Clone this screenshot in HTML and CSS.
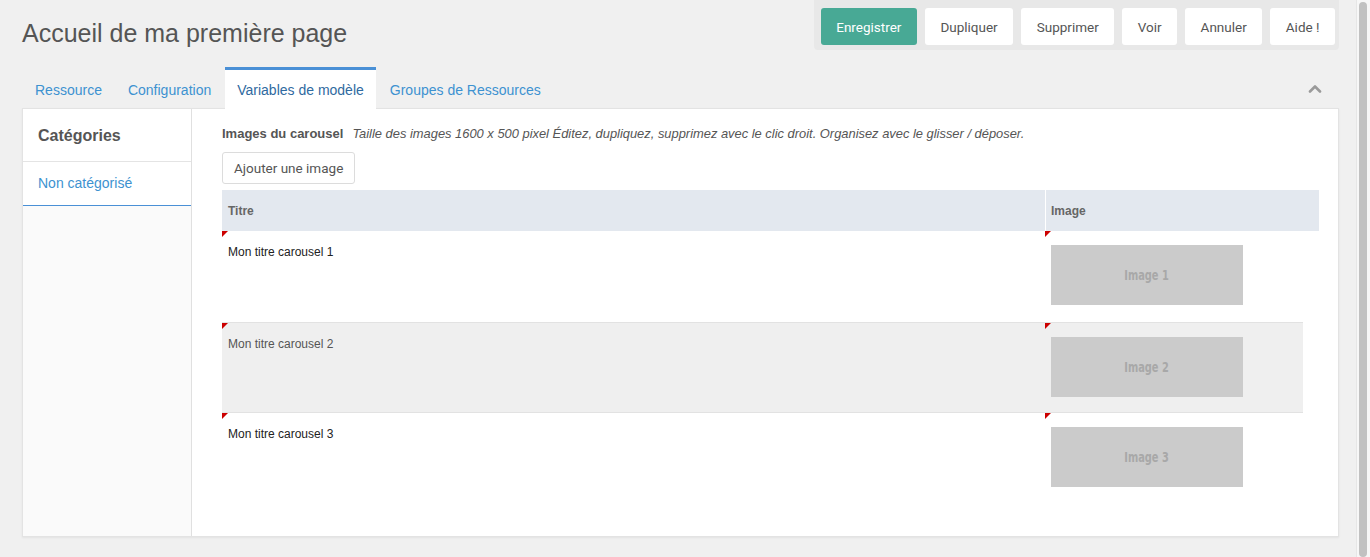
FILE: index.html
```html
<!DOCTYPE html>
<html lang="fr">
<head>
  <meta charset="UTF-8" />
  <title>Accueil de ma première page</title>
  <link rel="stylesheet" href="styles.css">
</head>
<body>

  <div class="page">
    <!-- en-tête : titre + barre d'actions -->
    <div class="top">
      <h1 class="title">Accueil de ma première page</h1>
      <div class="actions">
        <button class="btn btn-primary">Enregistrer</button>
        <button class="btn">Dupliquer</button>
        <button class="btn">Supprimer</button>
        <button class="btn">Voir</button>
        <button class="btn">Annuler</button>
        <button class="btn">Aide !</button>
      </div>
    </div>

    <!-- onglets -->
    <div class="tabs">
      <a class="tab">Ressource</a>
      <a class="tab">Configuration</a>
      <a class="tab active">Variables de modèle</a>
      <a class="tab">Groupes de Ressources</a>
      <span class="collapse">
        <svg width="14" height="9" viewBox="0 0 14 9"><path d="M2 7.5 L7 2.5 L12 7.5" fill="none" stroke="#9a9a9a" stroke-width="2.6" stroke-linecap="round" stroke-linejoin="round"/></svg>
      </span>
    </div>

    <div class="panel">
      <div class="sidebar">
        <div class="side-head">Catégories</div>
        <a class="side-item">Non catégorisé</a>
      </div>

      <div class="main">
        <div class="field-label">
          <strong>Images du carousel</strong><em>Taille des images 1600 x 500 pixel Éditez, dupliquez, supprimez avec le clic droit. Organisez avec le glisser / déposer.</em>
        </div>
        <button class="btn btn-small">Ajouter une image</button>

        <div class="grid">
          <div class="grid-head">
            <div class="hcell">Titre</div>
            <div class="hcell hcell-sep">Image</div>
          </div>
          <div class="grid-body">
            <div class="row">
              <div class="cell"><span class="dirty"></span>Mon titre carousel 1</div>
              <div class="cell"><span class="dirty"></span><div class="thumb"><span>Image 1</span></div></div>
            </div>
            <div class="row row-alt">
              <div class="cell"><span class="dirty"></span>Mon titre carousel 2</div>
              <div class="cell"><span class="dirty"></span><div class="thumb"><span>Image 2</span></div></div>
            </div>
            <div class="row row-last">
              <div class="cell"><span class="dirty"></span>Mon titre carousel 3</div>
              <div class="cell"><span class="dirty"></span><div class="thumb"><span>Image 3</span></div></div>
            </div>
          </div>
        </div>
      </div>
    </div>
  </div>

  <div class="scrollbar"><div class="thumb-bar"></div></div>

</body>
</html>
```

FILE: styles.css
```css
* {
  box-sizing: border-box;
}
body {
  margin: 0;
  height: 100vh;
  overflow: hidden;
  display: flex;
  background: #f0f0f0;
  font-family: 'Liberation Sans', Arial, sans-serif;
  color: #555;
}

.page {
  flex: 1;
  padding: 0 17px 0 22px;
}

/* en-tête */
.top {
  display: flex;
  justify-content: space-between;
  align-items: flex-start;
}
.title {
  margin: 18px 0 0;
  font-size: 25px;
  line-height: 30px;
  font-weight: normal;
  color: #555;
}
.actions {
  display: flex;
  gap: 8px;
  padding: 8px 4px 5px 7px;
  background: #e8e8e8;
  border-radius: 0 0 4px 4px;
}

/* boutons */
.btn {
  font-family: Roboto, 'Liberation Sans', sans-serif;
  font-size: 13.5px;
  color: #555;
  background: #fff;
  border: none;
  border-radius: 3px;
  height: 37px;
  padding: 0 15.5px;
  cursor: pointer;
}
.btn-primary {
  background: #48a995;
  color: #fff;
}
.btn-small {
  height: 32px;
  padding: 0 11px;
  border: 1px solid #dcdcdc;
  margin-top: 9px;
}

/* onglets */
.tabs {
  display: flex;
  align-items: stretch;
  margin-top: 17px;
  height: 42px;
  margin-bottom: -1px;
  position: relative;
  z-index: 1;
}
.tab {
  display: flex;
  align-items: center;
  padding: 4px 12px 0;
  margin-right: 2px;
  font-size: 14px;
  color: #3d92d0;
  cursor: pointer;
}
.tab:first-child {
  margin-left: 1px;
}
.tab.active {
  background: #fff;
  border-top: 3px solid #4a90d6;
  padding-top: 1px;
  color: #2f6aa0;
}
.collapse {
  margin-left: auto;
  margin-right: 17px;
  display: flex;
  align-items: center;
}

/* panneau */
.panel {
  display: flex;
  background: #fff;
  border: 1px solid #e3e3e3;
  box-shadow: 0 1px 2px rgba(0,0,0,0.06);
}
.sidebar {
  width: 169px;
  flex-shrink: 0;
  background: #fafafa;
  border-right: 1px solid #e0e0e0;
}
.side-head {
  background: #fff;
  padding: 17px 15px 15px;
  font-size: 16px;
  line-height: 20px;
  font-weight: bold;
  border-bottom: 1px solid #e4e4e4;
}
.side-item {
  display: block;
  background: #fff;
  padding: 12px 15px 13px;
  font-size: 14px;
  line-height: 18px;
  color: #3d92d0;
  border-bottom: 1px solid #4a90d6;
}

.main {
  flex: 1;
  padding: 15px 19px 32px 30px;
}
.field-label {
  line-height: 18px;
}
.field-label strong {
  font-size: 13px;
  color: #555;
}
.field-label em {
  font-size: 12.9px;
  margin-left: 9px;
}

/* grille des images */
.grid {
  margin-top: 6px;
}
.grid-head,
.row {
  display: grid;
  grid-template-columns: 823px 1fr;
}
.grid-head {
  background: #e3e8ef;
  height: 41px;
}
.hcell {
  display: flex;
  align-items: center;
  padding: 0 6px;
  font-size: 12px;
  font-weight: bold;
  color: #666;
}
.hcell-sep {
  border-left: 1px solid #fff;
  padding-left: 5px;
}
.grid-body {
  margin-right: 16px;
}
.row {
  color: #222;
}
.row-alt {
  background: #efefef;
  color: #555;
  border-top: 1px solid #e2e2e2;
  border-bottom: 1px solid #e2e2e2;
}
.cell {
  position: relative;
  padding: 14px 6px 17px;
  font-size: 12px;
  line-height: 15px;
}
.row-alt .cell {
  padding-bottom: 15px;
}
.dirty {
  position: absolute;
  top: 0;
  left: 0;
  width: 0;
  height: 0;
  border-top: 6px solid #c00;
  border-right: 6px solid transparent;
}
.thumb {
  width: 192px;
  height: 60px;
  background: #cbcbcb;
  display: flex;
  align-items: center;
  justify-content: center;
}
.thumb span {
  display: inline-block;
  font-family: 'DejaVu Sans Condensed', 'DejaVu Sans', sans-serif;
  font-weight: bold;
  font-size: 14px;
  color: #a8a8a8;
  transform: scaleX(0.78);
}

/* fausse barre de défilement */
.scrollbar {
  width: 14px;
  flex-shrink: 0;
  background: #f7f7f7;
  border-left: 1px solid #e6e6e6;
  padding: 2px 3px 0 2px;
}
.thumb-bar {
  height: 100%;
  background: #c1c1c1;
  border-radius: 4px;
}
```
